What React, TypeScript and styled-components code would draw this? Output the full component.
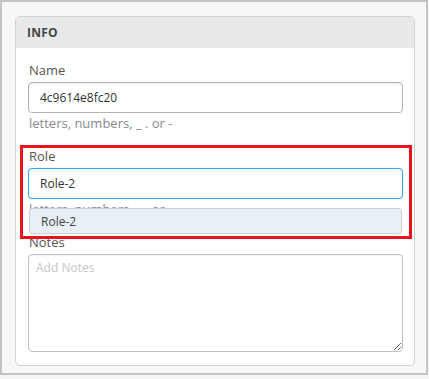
import React from "react";
import styled, { createGlobalStyle } from "styled-components";

const Global = createGlobalStyle`
  html, body { margin: 0; padding: 0; background: #f5f5f5; }
  body { font-family: "Open Sans", "Liberation Sans", sans-serif; }
  * { box-sizing: border-box; }
`;

const Frame = styled.div`
  width: 428px;
  height: 375px;
  border: 2px solid #c4c4c4;
  background: #f7f7f7;
  padding: 14px 0 0 13px;
`;

const Panel = styled.section`
  position: relative;
  width: 400px;
  height: 350px;
  background: #fff;
  border: 1px solid #d2d2d2;
  border-radius: 5px;
  overflow: visible;
`;

const Header = styled.div`
  height: 31px;
  background: #e8e9eb;
  border-radius: 4px 4px 0 0;
  display: flex;
  align-items: center;
  padding-left: 11px;
  font-size: 12px;
  font-weight: 700;
  color: #444;
  letter-spacing: 0.2px;
`;

const Body = styled.div`
  padding: 13px 11px 13px 12px;
  display: flex;
  flex-direction: column;
`;

const Field = styled.div<{ $gap?: number }>`
  position: relative;
  display: flex;
  flex-direction: column;
  margin-bottom: ${(p) => p.$gap ?? 15}px;
`;

const Label = styled.label<{ $mb?: number }>`
  font-size: 13px;
  line-height: 18px;
  color: #555;
  padding-left: 1px;
  margin-bottom: ${(p) => p.$mb ?? 3}px;
`;

const Input = styled.input<{ $focus?: boolean }>`
  height: 31px;
  width: 100%;
  border: 1px solid ${(p) => (p.$focus ? "#2aaae6" : "#b3b3b3")};
  border-radius: 4px;
  box-shadow: ${(p) =>
    p.$focus ? "0 0 1px rgba(42,170,230,0.5)" : "inset 0 1px 2px rgba(0,0,0,0.08)"};
  padding: 0 11px;
  font-family: inherit;
  font-size: 12px;
  color: #333;
  background: #fff;
  outline: none;
`;

const Hint = styled.div`
  font-size: 13px;
  line-height: 18px;
  color: #8a8a8a;
  margin-top: 1px;
  padding-left: 1px;
`;

const Dropdown = styled.ul`
  position: absolute;
  left: 1px;
  right: 1px;
  top: 61px;
  margin: 0;
  padding: 0;
  list-style: none;
  background: #e9eff6;
  border: 1px solid #cdcfd2;
  border-radius: 3px;
  box-shadow: 0 1px 2px rgba(0, 0, 0, 0.06);
`;

const Option = styled.li`
  height: 24px;
  display: flex;
  align-items: center;
  padding-left: 11px;
  font-size: 12px;
  color: #444;
`;

const Notes = styled.textarea`
  width: 100%;
  height: 98px;
  border: 1px solid #c2c2c2;
  border-radius: 4px;
  box-shadow: inset 0 1px 2px rgba(0, 0, 0, 0.06);
  padding: 4px 7px;
  font-family: inherit;
  font-size: 12px;
  color: #333;
  resize: vertical;
  outline: none;
  &::placeholder { color: #c8c8c8; }
`;

const Highlight = styled.div`
  position: absolute;
  left: 4px;
  top: 128px;
  width: 392px;
  height: 94px;
  border: 3px solid #e8141c;
  pointer-events: none;
`;

export default function App() {
  return (
    <>
      <Global />
      <Frame>
        <Panel>
          <Header>INFO</Header>
          <Body>
            <Field>
              <Label>Name</Label>
              <Input defaultValue="4c9614e8fc20" readOnly />
              <Hint>letters, numbers, _ . or -</Hint>
            </Field>
            <Field>
              <Label>Role</Label>
              <Input $focus defaultValue="Role-2" readOnly />
              <Hint>letters, numbers, _ . or -</Hint>
              <Dropdown>
                <Option>Role-2</Option>
              </Dropdown>
            </Field>
            <Field $gap={0}>
              <Label $mb={3}>Notes</Label>
              <Notes placeholder="Add Notes" />
            </Field>
          </Body>
          <Highlight />
        </Panel>
      </Frame>
    </>
  );
}
